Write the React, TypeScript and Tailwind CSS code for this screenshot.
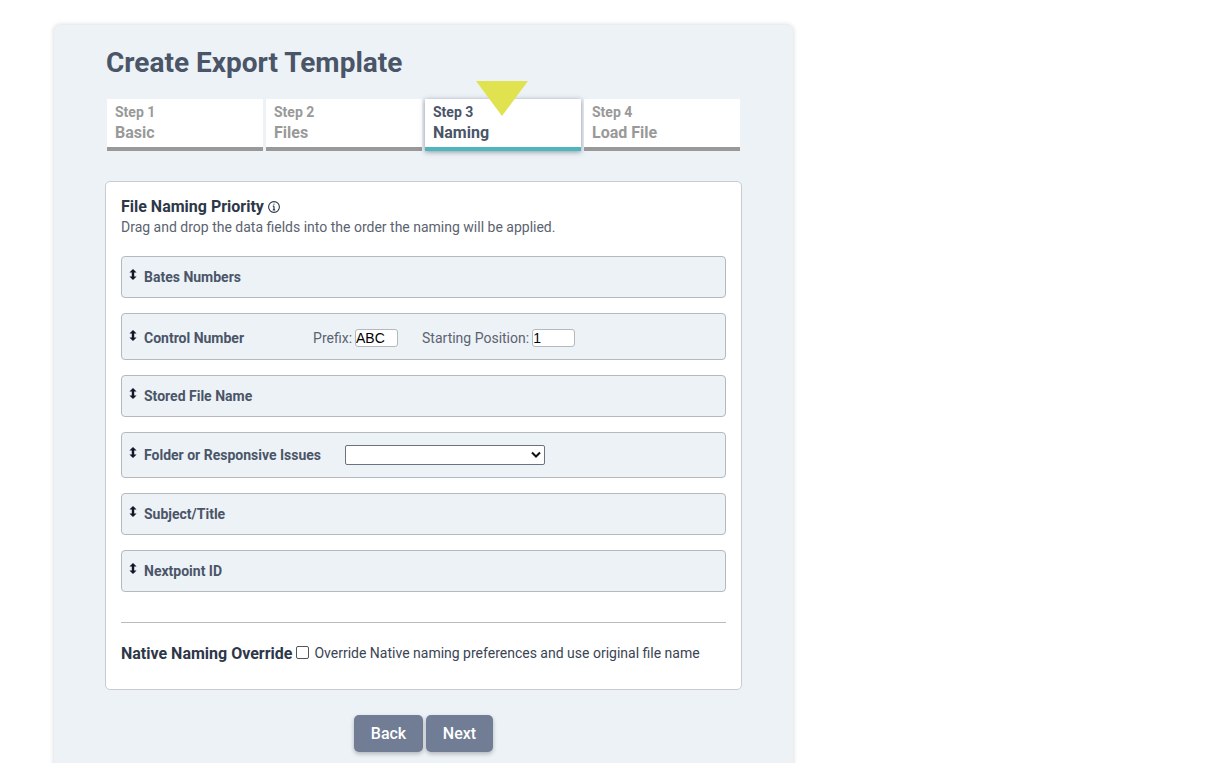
function Drag() {
  return (
    <svg width="8" height="11" viewBox="0 0 8 11" className="shrink-0" fill="#111827">
      <path d="M4 0 L7.6 3.6 H5.2 V7.4 H7.6 L4 11 L0.4 7.4 H2.8 V3.6 H0.4 Z" />
    </svg>
  );
}

function Row({ label, h, top, children }: { label: string; h: string; top: string; children?: React.ReactNode }) {
  return (
    <div className={`relative flex items-center rounded-[4px] border border-[#b4b9bf] bg-[#edf2f7] pl-[22px] ${h}`}>
      <span className={`absolute left-[7px] flex ${top}`}><Drag /></span>
      <span className="text-[14px] font-bold leading-5 text-[#4a5568]">{label}</span>
      {children}
    </div>
  );
}

function Step({ n, name, active }: { n: number; name: string; active?: boolean }) {
  return (
    <div
      className={`flex h-[52px] w-[156px] flex-col border-b-4 bg-white pl-2 pt-[4px] font-bold ${
        active
          ? "border-[#4fb6bd] text-[#4a5568] shadow-[0_1px_5px_rgba(60,70,85,0.55)]"
          : "border-[#999999] text-[#999999]"
      }`}
    >
      <span className="text-[14px] leading-[18px]">Step {n}</span>
      <span className="mt-[2px] text-[16px] leading-[20px]">{name}</span>
    </div>
  );
}

export default function App() {
  return (
    <div className="h-[763px] overflow-hidden bg-white pl-[54px] pt-[25px] font-['Roboto',sans-serif]">
      <div className="h-[760px] w-[739px] rounded-[6px] bg-[#edf2f7] pl-[51px] shadow-[0_0_5px_rgba(0,0,0,0.18)]">
        <h1 className="ml-px pt-[21px] text-[28px] font-bold leading-[34px] text-[#4a5568]">Create Export Template</h1>
        <div className="relative mt-[19px] flex gap-[3px] pl-[2px]">
          <Step n={1} name="Basic" />
          <Step n={2} name="Files" />
          <Step n={3} name="Naming" active />
          <Step n={4} name="Load File" />
          <svg className="absolute left-[371px] top-[-18px]" width="52" height="35" viewBox="0 0 52 35">
            <path d="M0 0 H52 L26 35 Z" fill="#e0e250" />
          </svg>
        </div>
        <div className="mt-[30px] h-[509px] w-[637px] rounded-[5px] border border-[#c8ccd0] bg-white px-[15px] pt-[15px]">
          <div className="flex items-center text-[16px] font-bold leading-5 text-[#2d3748]">
            File Naming Priority
            <svg className="ml-1" width="12" height="12" viewBox="0 0 12 12" fill="none" stroke="#2d3748" strokeWidth="1.1">
              <circle cx="6" cy="6" r="5.4" />
              <path d="M6 5.2 V8.8 M4.8 8.8 H7.2 M4.8 5.2 H6" strokeWidth="1.2" />
              <circle cx="6" cy="3.2" r="0.6" fill="#2d3748" stroke="none" />
            </svg>
          </div>
          <p className="text-[14px] leading-[20px] text-[#5b6370]">
            Drag and drop the data fields into the order the naming will be applied.
          </p>
          <div className="mt-[19px] flex flex-col gap-[15px]">
            <Row label="Bates Numbers" h="h-[42px]" top="top-[12px]" />
            <Row label="Control Number" h="h-[47px] pt-[2px]" top="top-[16px]">
              <span className="ml-[69px] text-[14px] text-[#5b6370] translate-y-px">Prefix:</span>
              <input
                readOnly
                value="ABC"
                className="ml-[3px] h-[18px] w-[43px] rounded-[3px] border border-[#b4b9bf] bg-white pt-px font-['Liberation_Sans',sans-serif] text-[14px] text-black"
              />
              <span className="ml-[24px] text-[14px] text-[#5b6370] translate-y-px">Starting Position:</span>
              <input
                readOnly
                value="1"
                className="ml-[3px] h-[18px] w-[43px] rounded-[3px] border border-[#b4b9bf] bg-white pt-px font-['Liberation_Sans',sans-serif] text-[14px] text-black"
              />
            </Row>
            <Row label="Stored File Name" h="h-[42px]" top="top-[12px]" />
            <Row label="Folder or Responsive Issues" h="h-[46px]" top="top-[14px]">
              <div className="relative ml-[24px] h-[20px] w-[200px] rounded-[2px] border border-[#6b7280] bg-white">
                <svg className="absolute right-[3px] top-[5px]" width="10" height="8" viewBox="0 0 10 8" fill="none" stroke="#111" strokeWidth="2">
                  <path d="M1 1.5 L5 5.5 L9 1.5" />
                </svg>
              </div>
            </Row>
            <Row label="Subject/Title" h="h-[42px]" top="top-[12px]" />
            <Row label="Nextpoint ID" h="h-[42px]" top="top-[12px]" />
          </div>
          <div className="mt-[30px] border-t border-[#b8bcc0]" />
          <div className="mt-[21px] flex items-center">
            <span className="text-[16px] font-bold leading-5 text-[#2d3748]">Native Naming Override</span>
            <span className="-mt-[4px] ml-[4px] h-[13px] w-[13px] rounded-[2px] border border-[#555] bg-white" />
            <span className="-mt-[2px] ml-[5px] text-[14px] leading-5 text-[#3a4454]">
              Override Native naming preferences and use original file name
            </span>
          </div>
        </div>
        <div className="mt-[25px] flex gap-[3px] pl-[249px]">
          <button className="h-[37px] w-[69px] rounded-[5px] bg-[#717d95] text-[16px] font-medium text-white shadow-[0_2px_4px_rgba(0,0,0,0.25)]">Back</button>
          <button className="h-[37px] w-[67px] rounded-[5px] bg-[#717d95] text-[16px] font-medium text-white shadow-[0_2px_4px_rgba(0,0,0,0.25)]">Next</button>
        </div>
      </div>
    </div>
  );
}
